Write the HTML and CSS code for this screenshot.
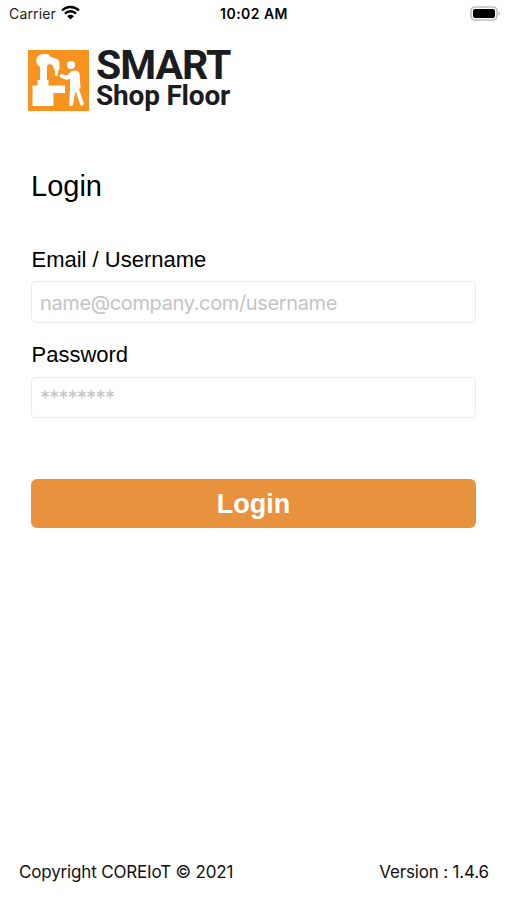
FILE: index.html
```html
<!DOCTYPE html>
<html lang="en">

<head>
    <meta charset="UTF-8">
    <title>SMART Shop Floor - Login</title>
    <link rel="stylesheet" href="styles.css">
</head>

<body>

    <header class="status-bar">
        <div class="carrier">
            <span>Carrier</span>
            <svg class="wifi" viewBox="0 0 18 14" width="19" height="15">
                <path d="M1 5.1a11.4 11.4 0 0 1 16 0M3.8 8a7.3 7.3 0 0 1 10.4 0" fill="none" stroke="#000" stroke-width="2.3" />
                <path d="M9 13.7L5.8 10.5a4.5 4.5 0 0 1 6.4 0z" />
            </svg>
        </div>
        <span class="clock">10:02 AM</span>
        <svg class="battery" viewBox="0 0 31 15" width="31" height="15">
            <rect x="1" y="1" width="26" height="13" rx="4" fill="#fff" stroke="#bdbdbd" stroke-width="1.6" />
            <rect x="3" y="3" width="22" height="9" rx="2" />
            <path d="M28.6 5.5c2.2.7 2.2 3.3 0 4z" fill="#bdbdbd" />
        </svg>
    </header>

    <div class="logo">
        <svg class="logo-icon" viewBox="0 0 61 61" width="61" height="61">
            <rect width="61" height="61" fill="#f7931e" />
            <g fill="#fff">
                <!-- robot arm -->
                <circle cx="15" cy="10.7" r="6.8" />
                <path d="M15 4h5l3 3 6 2q2.500 1 2.500 4v6l-1.500 2v4l-1.500 1.500L27 25v-4l-1-2-1.500-4-5-1.500L18 15z" />
                <path d="M12 14h7v16h1.500v5.500H37V43H25.500v13h-21V35.500H9.500V30H12z" />
                <!-- worker -->
                <circle cx="43" cy="15" r="4.1" />
                <path d="M33 24l6 1.500 4-4q2.500-1.500 5-1 3 .5 3.500 3.500l1 13q0 2-1.500 2l5 15q-1 2.500-3.500 1.500L47.500 41 45 55q-2 2-4 0l1-15V28.500l-3 1.500-6.500-2.500q-2-2 .5-3.500z" />
            </g>
        </svg>
        <div class="logo-text">
            <span class="logo-title">SMART</span>
            <span class="logo-subtitle">Shop Floor</span>
        </div>
    </div>

    <form class="login-form">
        <h1>Login</h1>
        <label for="username">Email / Username</label>
        <input type="text" id="username" placeholder="name@company.com/username">
        <label for="password">Password</label>
        <input type="password" id="password" placeholder="********">
        <button type="button" class="login-btn">Login</button>
    </form>

    <footer>
        <span class="copyright">Copyright COREIoT © 2021</span>
        <span class="version">Version : 1.4.6</span>
    </footer>

</body>

</html>
```

FILE: styles.css
```css
* {
    box-sizing: border-box;
}

body {
    margin: 0;
    height: 900px;
    display: flex;
    flex-direction: column;
    background: white;
    color: #000;
    font-family: 'Liberation Sans', Arial, sans-serif;
    overflow: hidden;
}

.status-bar {
    display: grid;
    grid-template-columns: 1fr auto 1fr;
    align-items: center;
    height: 27px;
    padding: 0 6px 0 9px;
    font-family: Inter, sans-serif;
    font-size: 14px;
}

.carrier {
    display: flex;
    align-items: center;
    gap: 5px;
    color: #222;
    letter-spacing: 0.15px;
}

.wifi {
    margin-top: -2px;
}

.clock {
    margin-right: 2px;
    font-weight: 600;
    letter-spacing: 0.45px;
}

.battery {
    justify-self: end;
}

.logo {
    display: flex;
    gap: 7px;
    margin: 23px 0 0 28px;
    height: 61px;
}

.logo-text {
    display: flex;
    flex-direction: column;
    color: #1a1c20;
    font-family: Roboto, sans-serif;
    font-weight: bold;
    white-space: nowrap;
}

.logo-title {
    font-size: 41px;
    line-height: 30px;
    letter-spacing: -1px;
}

.logo-subtitle {
    font-size: 28px;
    line-height: 31px;
    letter-spacing: -0.2px;
}

.login-form {
    display: flex;
    flex-direction: column;
    padding: 0 31px;
}

.login-form h1 {
    margin: 58px 0 44px;
    font-size: 29px;
    font-weight: normal;
    line-height: 34px;
}

.login-form label {
    padding-left: 0.5px;
    font-size: 22px;
    line-height: 26px;
}

.login-form input {
    height: 42px;
    margin: 8px 0 19px;
    padding: 1px 8px 0;
    border: 1px solid #ebebeb;
    border-radius: 5px;
    background: white;
    font-family: Inter, sans-serif;
    font-size: 20px;
}

.login-form input::placeholder {
    color: #c4c4c6;
    letter-spacing: -0.36px;
}

#password {
    height: 41px;
    margin-top: 9px;
}

#password::placeholder {
    letter-spacing: -0.75px;
}

.login-btn {
    height: 49px;
    margin-top: 42px;
    padding: 2px 0 0;
    border: none;
    border-radius: 6px;
    background: #e9923d;
    color: white;
    font-family: 'Liberation Sans', Arial, sans-serif;
    font-size: 27px;
    font-weight: bold;
}

footer {
    display: flex;
    justify-content: space-between;
    margin-top: auto;
    padding: 0 18px 17px 19px;
    font-family: Inter, sans-serif;
    font-size: 17px;
    line-height: 21px;
    letter-spacing: -0.17px;
    color: #111;
}
```
